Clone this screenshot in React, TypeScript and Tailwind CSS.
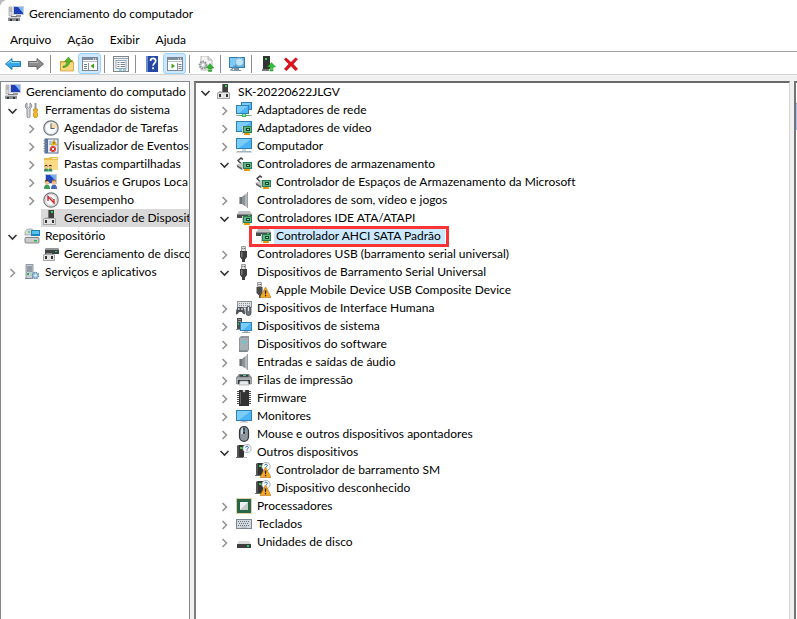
import { useState, type ReactNode } from 'react';
import clsx from 'clsx';

function Svg({ children }: { children: ReactNode }) {
  return (
    <svg viewBox="0 0 16 16" className="size-4 shrink-0" aria-hidden="true">
      {children}
    </svg>
  );
}

function Screen({ x = 0, y = 1, w = 16, h = 11 }: { x?: number; y?: number; w?: number; h?: number }) {
  return (
    <g>
      <rect x={x} y={y} width={w} height={h} fill="#2f7fb5" />
      <rect x={x + 1} y={y + 1} width={w - 2} height={h - 2} fill="#4ab4f5" />
      <path d={`M${x + 1} ${y + 1}h${w - 2}l-${w - 4} ${h - 2}h-2z`} fill="#7accfa" />
    </g>
  );
}

function Card() {
  return (
    <g>
      <path d="M6 6h1v8H6z" fill="#c9c9c9" />
      <rect x="7" y="6" width="9" height="7" fill="#2c7d50" />
      <rect x="8" y="7" width="7" height="5" fill="#5fb384" />
      <rect x="10" y="8" width="4" height="3" fill="#174a31" />
      <rect x="11" y="9" width="2" height="1" fill="#8fd1ae" />
      <path d="M8 13h6v2H8z" fill="#f0a516" />
      <path d="M10 13v2M12 13v2" stroke="#c97b0a" strokeWidth=".5" />
    </g>
  );
}

function Warning() {
  return (
    <g>
      <path d="M10.500 5 16 15.500H5z" fill="#f7a823" stroke="#b87410" strokeWidth=".6" />
      <path d="M9.700 8.500h1.700l-.4 3.700h-.9zM9.900 13h1.300v1.300H9.900z" fill="#222" />
    </g>
  );
}

function Tower() {
  return (
    <g>
      <path d="M1 2 3 1h5v12H1z" fill="#333" />
      <path d="M1 2 3 1v12H1z" fill="#555" />
      <rect x="4" y="3" width="2" height="2" fill="#35d04b" />
      <path d="M0 13h7v1H0z" fill="#6b6b6b" />
      <path d="M7 13h4v1H7z" fill="#b5b5b5" />
    </g>
  );
}

function Person({ x, hair, body }: { x: number; hair: string; body: string }) {
  return (
    <g>
      <path d={`M${x} 15c0-3 1-4.500 3-4.500s3 1.500 3 4.500z`} fill={body} />
      <circle cx={x + 3} cy="8.500" r="2.200" fill="#f0c090" />
      <path d={`M${x + 0.7} 8.500c0-4 4.600-4 4.600 0l-1-1.300H${x + 1.7}z`} fill={hair} />
    </g>
  );
}

const icons = {
  management: (
    <Svg>
      <rect x="5" y="0" width="11" height="9" fill="#c9ccd4" />
      <rect x="6" y="1" width="9" height="7" fill="#1f3fb8" />
      <path d="M10 1h5v6z" fill="#7fb6f5" />
      <path d="M8 9h5v2H8z" fill="#9a9a9a" />
      <path d="M1 1h3v9H1z" fill="#dadada" stroke="#909090" strokeWidth=".6" />
      <path d="M1.500 3h2M1.500 5h2" stroke="#777" strokeWidth=".7" />
      <path d="M3 10h6v1H3z" fill="#777" />
      <rect x="0" y="11" width="12" height="4" fill="#8b8f94" />
      <path d="M0 11h12v1H0z" fill="#d0d4d8" />
      <path d="M2 13h2v2H2zM8 13h2v2H8z" fill="#333" />
    </Svg>
  ),
  tools: (
    <Svg>
      <path d="M3 1v4l1.500 1L6 5V1c2 1 2.500 4 0 6v7.500c0 1.500-3 1.500-3 0V7C.5 5 1 2 3 1z" fill="#d6d9db" stroke="#6f7376" strokeWidth=".8" />
      <path d="M10.500 1h2v6h-2z" fill="#999" />
      <path d="M9.500 7h4v2l-.8 1 .8 1v3.500c0 1.500-4 1.500-4 0V11l.8-1-.8-1z" fill="#f4b526" stroke="#b47a0a" strokeWidth=".6" />
    </Svg>
  ),
  clock: (
    <Svg>
      <circle cx="8" cy="8" r="7.200" fill="#d8dce0" stroke="#6f767c" strokeWidth="1.200" />
      <circle cx="8" cy="8" r="5.500" fill="#fbfcfe" />
      <path d="M8 8V2.500A5.500 5.500 0 0 1 13.500 8z" fill="#f5d9a8" />
      <path d="M8 3.500V8.500h3.500" fill="none" stroke="#59636d" strokeWidth="1.100" />
    </Svg>
  ),
  events: (
    <Svg>
      <rect x="2" y="1" width="13" height="14" fill="#e4ecf6" stroke="#5a6f91" />
      <rect x="2" y="1" width="3" height="14" fill="#50719f" />
      <path d="M.5 3h3M.5 5.500h3M.5 8h3M.5 10.500h3M.5 13h3" stroke="#878787" />
      <path d="M6 4h3M6 6h2M6 12h2" stroke="#7b9cca" />
      <path d="m11 2 3 5H8z" fill="#f9c51c" stroke="#b98c00" strokeWidth=".5" />
      <path d="M11 3.800v2" stroke="#222" strokeWidth=".8" />
      <circle cx="10" cy="11" r="3" fill="#dc3527" />
      <path d="m8.800 9.800 2.400 2.400m0-2.400-2.400 2.400" stroke="#fff" strokeWidth=".9" />
    </Svg>
  ),
  shared: (
    <Svg>
      <path d="M1 4V2h5l1-1h8v13H1z" fill="#e8bb4b" />
      <path d="M1 4h14v10H1z" fill="#fbdc85" />
      <path d="M9 2h5v1H9z" fill="#fff2c4" />
      <g transform="translate(1 5) scale(.7)">
        <Person x={0} hair="#4c301b" body="#39895a" />
        <Person x={6} hair="#332217" body="#2f8f63" />
      </g>
    </Svg>
  ),
  users: (
    <Svg>
      <rect x="2" y="0" width="12" height="10" fill="#c9ccd4" />
      <rect x="3" y="1" width="10" height="8" fill="#2147c0" />
      <path d="M7 1h6v6z" fill="#79aff0" />
      <Person x={1} hair="#4c301b" body="#3b9c53" />
      <Person x={8} hair="#b6762b" body="#416cb3" />
    </Svg>
  ),
  performance: (
    <Svg>
      <circle cx="8" cy="8" r="7.200" fill="#eee" stroke="#76797c" strokeWidth="1.200" />
      <circle cx="8" cy="8" r="5.500" fill="#fff" stroke="#bbb" strokeWidth=".6" />
      <path d="M5 9V4.500l6 6.500V7" fill="none" stroke="#d3262c" strokeWidth="1.400" />
      <path d="M7 4.500 10.500 8" stroke="#444" strokeWidth=".8" />
    </Svg>
  ),
  device: (
    <Svg>
      <path d="M5 1l1-1h5v9H5z" fill="#3f3f3f" />
      <path d="M5 1l1-1v9H5z" fill="#777" />
      <path d="M8 1h2v2H8z" fill="#2bd247" />
      <path d="M2 7h3v1H2z" fill="#bbb" />
      <path d="M1 8h11l1 1v6H0V9z" fill="#a5a6a8" />
      <path d="M1 9h11v5H1z" fill="#e4e4e5" />
      <path d="M2 10h2v3H2zM9 10h2v3H9z" fill="#333" />
    </Svg>
  ),
  storage: (
    <Svg>
      <path d="M1 4c1-4 8-4 9-1l-2 4H1z" fill="#d5dbde" stroke="#828a8e" strokeWidth=".6" />
      <circle cx="5" cy="4" r="1.300" fill="#8fc96f" />
      <rect x="7" y="2" width="9" height="6" fill="#1f86bd" />
      <rect x="8" y="3" width="7" height="3" fill="#54c2ee" />
      <path d="M2 8h12l1 2H1z" fill="#eee" />
      <rect x="1" y="9.500" width="14" height="5.500" rx="1" fill="#cacccd" stroke="#6c6f70" strokeWidth=".8" />
      <path d="M10 12h3v1.500h-3z" fill="#25bd35" />
    </Svg>
  ),
  diskManagement: (
    <Svg>
      <path d="M3 2h12l1 2v4H2V4z" fill="#3f4245" />
      <path d="M3 2h12l1 2H2z" fill="#929699" />
      <path d="M12 5h2v1h-2z" fill="#2bd247" />
      <path d="M3 7h6v1H3z" fill="#8d8e90" />
      <path d="M1 8h10l1 1v6H0V9z" fill="#a5a6a8" />
      <path d="M1 9h10v5H1z" fill="#e4e4e5" />
      <path d="M2 10h2v3H2zM8 10h2v3H8z" fill="#333" />
    </Svg>
  ),
  services: (
    <Svg>
      <path d="M2 .5h7v14H2z" fill="#c3ccd3" stroke="#7d878f" strokeWidth=".8" />
      <path d="M3 3h5M3 5h5M3 7h5" stroke="#63717d" />
      <path d="M3 9h2v2H3z" fill="#30b540" />
      <circle cx="11.500" cy="11.500" r="3" fill="#a7cbe5" stroke="#5b8baf" strokeWidth="1.500" strokeDasharray="1.500 .8" />
      <circle cx="11.500" cy="11.500" r="1.100" fill="#fff" />
      <path d="M1 14h6v1H1z" fill="#7d878f" />
    </Svg>
  ),
  network: (
    <Svg>
      <Screen x={5} y={0} w={11} h={8} />
      <Screen x={0} y={3} w={13} h={9} />
      <path d="M2 13h12v1H2zM6 12h4v3H6z" fill="#42b85a" />
      <path d="M7 12h2v2H7z" fill="#8fe09b" />
      <path d="M0 13h3v1H0zM13 13h3v1h-3z" fill="#aaa" />
    </Svg>
  ),
  video: (
    <Svg>
      <Screen />
      <Card />
    </Svg>
  ),
  computer: (
    <Svg>
      <Screen y={0} />
      <path d="M6 11h4v2H6z" fill="#d5d9dd" />
      <path d="M1 13h14l1 1.500H0z" fill="#9fb3c2" />
    </Svg>
  ),
  storageCtl: (
    <Svg>
      <path d="M1 4.500 5 1l2.500 2-1.200 1L5 3 3 4.700 5.500 7l1-.8L8 7.500 5.500 9z" fill="#444" />
      <path d="M0 9 7 6.500 15 9v3H3z" fill="#c5c7c8" />
      <path d="m1 9 5 3v2L1 11z" fill="#66696b" />
      <Card />
    </Svg>
  ),
  speaker: (
    <Svg>
      <path d="M3 5h3v7H3z" fill="#6e7377" />
      <path d="M6 5 11 1v14.500L6 12z" fill="#b4b9bc" />
      <path d="M6 5 9 2.500v11.500L6 12z" fill="#8d9397" />
      <path d="M11 0h1v16h-1z" fill="#9ba1a5" />
      <path d="M3 5h1v7H3z" fill="#a9adb0" />
    </Svg>
  ),
  ide: (
    <Svg>
      <path d="M3 1h11l2 3H1z" fill="#bfc2c4" />
      <path d="M1 4h15v4H1z" fill="#4a4d50" />
      <path d="M1 4h15v1H1z" fill="#85898c" />
      <path d="M12 5h2v1h-2z" fill="#2bd247" />
      <Card />
    </Svg>
  ),
  usb: (
    <Svg>
      <path d="M5.500.5h4v5h-4z" fill="#ddd" stroke="#8a8a8a" strokeWidth=".8" />
      <path d="M6.500 2h.8v1h-.8zM8 2h.8v1H8z" fill="#444" />
      <path d="M4 5h7v6l-2 2.500V16H6v-2.500L4 11z" fill="#3e3e3e" />
      <path d="M5 6h1.500v5H5z" fill="#7a7a7a" />
    </Svg>
  ),
  usbWarn: (
    <Svg>
      <path d="M2.500.5h4v4h-4z" fill="#ddd" stroke="#8a8a8a" strokeWidth=".8" />
      <path d="M3.500 2h.8v1h-.8zM5 2h.8v1H5z" fill="#444" />
      <path d="M1.500 5h6v6L6 13.500V16H4v-2.500L1.500 11z" fill="#4b4b4b" />
      <Warning />
    </Svg>
  ),
  hid: (
    <Svg>
      <rect x="1.500" y="1.500" width="14" height="6" fill="#dfe3e7" stroke="#8a9197" />
      <path d="M3 3.500h11M3 5.500h11" stroke="#8a9197" strokeDasharray="1 1" />
      <path d="M0 14c0-4 1-7 3-7h3c2 0 3 3 3 7-1.500 1.500-2.500-2-3.500-2h-2C2.500 12 1 16 0 14z" fill="#4c5155" />
      <circle cx="2.800" cy="9" r="1" fill="#ccc" />
      <circle cx="6" cy="9" r="1" fill="#ccc" />
      <rect x="10" y="6.500" width="5" height="9" rx="2.500" fill="#71777c" stroke="#3d4246" strokeWidth=".8" />
      <path d="M12.500 7v4" stroke="#e5e5e5" />
    </Svg>
  ),
  system: (
    <Svg>
      <path d="M1 0h5v11H1z" fill="#4a4d50" />
      <path d="M2 1h3v1H2zM2 3h3v1H2z" fill="#999" />
      <path d="M2 5h1v2H2z" fill="#2bd247" />
      <path d="M0 11h6v1H0z" fill="#888" />
      <Screen x={4} y={4} w={12} h={9} />
      <path d="M8 13h4v1H8z" fill="#b7bcc0" />
      <path d="M6 14h8v1H6z" fill="#9aa4ab" />
    </Svg>
  ),
  software: (
    <Svg>
      <path d="M3 2 5 0h8v14l-2 2H3z" fill="#8e979d" />
      <path d="M4 2h8v13H4z" fill="#a6afb4" />
      <circle cx="8" cy="6" r="1.200" fill="#35dce8" />
      <path d="M3 15h9" stroke="#6d767b" />
    </Svg>
  ),
  printer: (
    <Svg>
      <path d="M3 2h10l2 3H1z" fill="#757a7e" />
      <path d="M4 3h8v2H4z" fill="#3a3d40" />
      <rect x="0" y="5" width="16" height="7" rx="1" fill="#a9adb0" stroke="#73787b" strokeWidth=".7" />
      <path d="M2 8h12v4H2z" fill="#35383a" />
      <path d="M7 3h3v1H7z" fill="#42d49b" />
      <path d="M4 9h8l1 4H3z" fill="#e8eaeb" stroke="#8a8d8f" strokeWidth=".6" />
    </Svg>
  ),
  firmware: (
    <Svg>
      <path d="M3 1v14M13 1v14" stroke="#555" strokeWidth="4" strokeDasharray="1 1" />
      <rect x="3" y="0" width="10" height="16" fill="#333" />
      <path d="M4 2h1v12H4z" fill="#656565" />
      <circle cx="8" cy="1" r="1.300" fill="#d0d0d0" />
    </Svg>
  ),
  monitor: (
    <Svg>
      <Screen y={2} />
      <path d="M6 13h4v1H6z" fill="#9aa4ab" />
      <path d="M4 14h8" stroke="#b7bcc0" />
    </Svg>
  ),
  mouse: (
    <Svg>
      <rect x="3.500" y=".7" width="9" height="14.600" rx="4.500" fill="#8f969d" stroke="#30363d" strokeWidth="1.200" />
      <path d="M5 4c0-2 1-2.500 2-2.500V8H5z" fill="#ced3d8" />
      <rect x="7" y="2" width="2" height="6" rx="1" fill="#26313d" />
      <path d="M8 3.500v2.500" stroke="#61bff1" strokeWidth=".8" />
    </Svg>
  ),
  unknown: (
    <Svg>
      <Tower />
      <circle cx="11" cy="4.500" r="4.200" fill="#f6f8fa" stroke="#9aa3aa" strokeWidth=".8" />
      <path d="M9.600 3.600c0-1.900 2.800-1.900 2.800 0 0 1-1.400 1-1.400 2.100M11 6.400v.9" fill="none" stroke="#2872b9" />
    </Svg>
  ),
  unknownWarn: (
    <Svg>
      <Tower />
      <circle cx="11" cy="4.500" r="4.200" fill="#f6f8fa" stroke="#9aa3aa" strokeWidth=".8" />
      <path d="M9.700 3.300c0-1.600 2.600-1.600 2.600 0 0 1-1.300 1-1.300 2.100" fill="none" stroke="#2872b9" />
      <Warning />
    </Svg>
  ),
  cpu: (
    <Svg>
      <rect x=".5" y=".5" width="15" height="15" fill="none" stroke="#c8a343" strokeDasharray="1 1" />
      <rect x="1" y="1" width="14" height="14" fill="#28664a" />
      <rect x="4" y="4" width="8" height="8" fill="#c5cdc9" />
      <path d="M4 4h8l-8 8z" fill="#eef1f0" />
    </Svg>
  ),
  keyboard: (
    <Svg>
      <rect x=".5" y="3.500" width="15" height="9" fill="#d4d9e0" stroke="#7c8591" />
      <path d="M2 5.500h12M2 9.500h12" stroke="#68717d" strokeDasharray="1 1" />
      <path d="M3 7.500h10" stroke="#68717d" strokeDasharray="1 1" />
      <path d="M5 11h6" stroke="#9aa2ac" strokeWidth=".7" />
    </Svg>
  ),
  disk: (
    <Svg>
      <path d="M3 7h10l2 3H1z" fill="#d9dadb" />
      <path d="M1 10h14v4H1z" fill="#3c3e40" />
      <path d="M11 11h2v2h-2z" fill="#2bd247" />
    </Svg>
  ),
};

type IconName = keyof typeof icons;

interface TreeNode {
  label: string;
  icon: IconName;
  open?: boolean;
  closed?: boolean;
  selected?: boolean;
  marked?: boolean;
  children?: TreeNode[];
}

const consoleTree: TreeNode[] = [
  {
    label: 'Ferramentas do sistema',
    icon: 'tools',
    open: true,
    children: [
      { label: 'Agendador de Tarefas', icon: 'clock', closed: true },
      { label: 'Visualizador de Eventos', icon: 'events', closed: true },
      { label: 'Pastas compartilhadas', icon: 'shared', closed: true },
      { label: 'Usuários e Grupos Loca', icon: 'users', closed: true },
      { label: 'Desempenho', icon: 'performance', closed: true },
      { label: 'Gerenciador de Disposit', icon: 'device', selected: true },
    ],
  },
  {
    label: 'Repositório',
    icon: 'storage',
    open: true,
    children: [{ label: 'Gerenciamento de disco', icon: 'diskManagement' }],
  },
  { label: 'Serviços e aplicativos', icon: 'services', closed: true },
];

const deviceTree: TreeNode[] = [
  {
    label: 'SK-20220622JLGV',
    icon: 'device',
    open: true,
    children: [
      { label: 'Adaptadores de rede', icon: 'network', closed: true },
      { label: 'Adaptadores de vídeo', icon: 'video', closed: true },
      { label: 'Computador', icon: 'computer', closed: true },
      {
        label: 'Controladores de armazenamento',
        icon: 'storageCtl',
        open: true,
        children: [{ label: 'Controlador de Espaços de Armazenamento da Microsoft', icon: 'storageCtl' }],
      },
      { label: 'Controladores de som, vídeo e jogos', icon: 'speaker', closed: true },
      {
        label: 'Controladores IDE ATA/ATAPI',
        icon: 'ide',
        open: true,
        children: [{ label: 'Controlador AHCI SATA Padrão', icon: 'ide', marked: true }],
      },
      { label: 'Controladores USB (barramento serial universal)', icon: 'usb', closed: true },
      {
        label: 'Dispositivos de Barramento Serial Universal',
        icon: 'usb',
        open: true,
        children: [{ label: 'Apple Mobile Device USB Composite Device', icon: 'usbWarn' }],
      },
      { label: 'Dispositivos de Interface Humana', icon: 'hid', closed: true },
      { label: 'Dispositivos de sistema', icon: 'system', closed: true },
      { label: 'Dispositivos do software', icon: 'software', closed: true },
      { label: 'Entradas e saídas de áudio', icon: 'speaker', closed: true },
      { label: 'Filas de impressão', icon: 'printer', closed: true },
      { label: 'Firmware', icon: 'firmware', closed: true },
      { label: 'Monitores', icon: 'monitor', closed: true },
      { label: 'Mouse e outros dispositivos apontadores', icon: 'mouse', closed: true },
      {
        label: 'Outros dispositivos',
        icon: 'unknown',
        open: true,
        children: [
          { label: 'Controlador de barramento SM', icon: 'unknownWarn' },
          { label: 'Dispositivo desconhecido', icon: 'unknownWarn' },
        ],
      },
      { label: 'Processadores', icon: 'cpu', closed: true },
      { label: 'Teclados', icon: 'keyboard', closed: true },
      { label: 'Unidades de disco', icon: 'disk', closed: true },
    ],
  },
];

function Chevron({ open }: { open: boolean }) {
  return (
    <svg viewBox="0 0 16 16" className="size-4" fill="none" aria-hidden="true">
      {open ? (
        <path d="m4.500 7 4 4 4-4" stroke="#333" strokeWidth="1.600" />
      ) : (
        <path d="m6.500 5 4 4-4 4" stroke="#949494" strokeWidth="1.600" />
      )}
    </svg>
  );
}

function Item({ node }: { node: TreeNode }) {
  const expandable = !!(node.children || node.closed);
  const [open, setOpen] = useState(!!node.open);

  return (
    <li>
      <div className="flex h-[18px] items-center gap-0.5">
        {expandable ? (
          <button aria-label={node.label} aria-expanded={open} onClick={() => setOpen(!open)}>
            <Chevron open={open} />
          </button>
        ) : (
          <span className="w-4 shrink-0" />
        )}
        <button
          className={clsx(
            'relative flex h-full items-center gap-[3px] pl-0.5 whitespace-nowrap',
            node.selected && 'grow bg-[#d9d9d9]'
          )}
        >
          {icons[node.icon]}
          <span className={clsx('px-0.5', node.marked && 'bg-[#cce8ff] pr-1')}>{node.label}</span>
          {node.marked && <span className="absolute -inset-x-1 -top-px -bottom-0.5 border-3 border-[#fa3434]" />}
        </button>
      </div>
      {open && node.children && (
        <ul className="pl-[19px]">
          {node.children.map((child) => (
            <Item key={child.label} node={child} />
          ))}
        </ul>
      )}
    </li>
  );
}

function ToolButton({ label, active, children }: { label: string; active?: boolean; children: ReactNode }) {
  return (
    <button
      aria-label={label}
      className={clsx(
        'flex h-[21px] w-[23px] items-center justify-center rounded-[3px] border',
        active ? 'border-[#99d1ff] bg-[#cce8ff]' : 'border-transparent'
      )}
    >
      <Svg>{children}</Svg>
    </button>
  );
}

function Separator() {
  return <span className="mr-1 ml-[3px] h-[18px] w-px bg-[#8d8d8d]" />;
}

function PaneGlyph({ flip }: { flip?: boolean }) {
  return (
    <g>
      <rect x=".5" y="1.500" width="15" height="13" fill="#fff" stroke="#7d8590" />
      <path d="M1 2h14v2H1z" fill="#7d8ea5" />
      <path d="M11 3h1M13 3h1" stroke="#fff" />
      <path d="M1 5.500h14" stroke="#b9c0c8" />
      <path d={flip ? 'M10.500 7v7' : 'M6.500 7v7'} stroke="#8b939c" />
      <path d={flip ? 'M11.500 8.500h3M11.500 10.500h3M11.500 12.500h3' : 'M2 8.500h3M2 10.500h3M2 12.500h3'} stroke="#6f7d8e" />
      <path d={flip ? 'M4.500 7.500v5l3.500-2.500z' : 'M12 7.500v5L8.500 10z'} fill="#3aa317" />
    </g>
  );
}

function Toolbar() {
  return (
    <div className="flex h-[23px] items-center border-b border-[#d5d5d5] pt-px pl-px">
      <ToolButton label="Voltar">
        <path d="M.5 8 7 2.500v3h8.500v5H7v3z" fill="#35a7e8" stroke="#1873b5" strokeWidth=".9" />
        <path d="M2.500 7.500 6 4.500v2h8.500" fill="none" stroke="#9bdcfa" />
      </ToolButton>
      <ToolButton label="Avançar">
        <path d="M15.500 8 9 2.500v3H.5v5H9v3z" fill="#8c8c8c" stroke="#606060" strokeWidth=".9" />
        <path d="M1.500 6.500H10v-2" fill="none" stroke="#bdbdbd" />
      </ToolButton>
      <Separator />
      <ToolButton label="Acima">
        <path d="M1 5h5l1-1h7v11H1z" fill="#e1ad3d" />
        <path d="M1.500 6h13v9h-13z" fill="#fad77c" stroke="#c89533" strokeWidth=".7" />
        <path d="M4 10c3 0 3.500-2 3.800-4.500H5.500L9.500 1l3.500 4.500h-2.200C10.500 9 8 11.500 4 11.500z" fill="#57b52b" stroke="#2e8517" strokeWidth=".5" />
      </ToolButton>
      <ToolButton label="Mostrar árvore do console" active>
        <PaneGlyph />
      </ToolButton>
      <Separator />
      <ToolButton label="Propriedades">
        <rect x=".5" y=".5" width="15" height="15" fill="#eef0f2" stroke="#7e858c" />
        <path d="M1 2.500h14" stroke="#9ca6b0" />
        <rect x="3" y="4.500" width="10" height="8" fill="#fff" stroke="#7894b6" strokeWidth=".8" />
        <path d="M4.500 6.500h2M4.500 8.500h2M4.500 10.500h2M7.500 6.500H12M7.500 8.500H12M7.500 10.500H12" stroke="#6b7480" strokeWidth=".9" />
        <path d="M6 14h3M10 14h3" stroke="#3eabc9" />
      </ToolButton>
      <Separator />
      <ToolButton label="Ajuda">
        <rect x="2" y="0" width="12" height="16" fill="#2648a5" />
        <path d="M2 0h2v16H2z" fill="#6d8bd1" />
        <path d="M6.500 5c0-3.500 5.200-3.500 5.200 0 0 2-2.600 2.300-2.600 4.800M9.100 11.300v2" fill="none" stroke="#fff" strokeWidth="1.700" />
      </ToolButton>
      <ToolButton label="Mostrar painel de ações" active>
        <PaneGlyph flip />
      </ToolButton>
      <Separator />
      <ToolButton label="Verificar alterações de hardware">
        <path d="M3 0h7l4 4v10H3z" fill="#f4f4f4" stroke="#aaa" strokeWidth=".8" />
        <path d="M10 0v4h4" fill="#ddd" stroke="#aaa" strokeWidth=".8" />
        <circle cx="5" cy="9" r="3.500" fill="#c3c7ca" stroke="#8b9094" strokeWidth="1.800" strokeDasharray="1.600 1" />
        <circle cx="5" cy="9" r="1.400" fill="#fff" />
        <path d="M12 7.500 16 12h-2.300v1h-3.400v-1H8zM10.300 14h3.400v1.500h-3.400z" fill="#2fb52f" stroke="#178718" strokeWidth=".4" />
      </ToolButton>
      <Separator />
      <ToolButton label="Adicionar driver">
        <Screen y={1} h={11} />
        <path d="M5 12h5v2H5zM3 14h9v1H3z" fill="#8294a2" />
        <circle cx="10.500" cy="6" r="4" fill="#b9e4fb" stroke="#8fb3c9" strokeWidth="1.100" />
        <path d="m7.500 9-6 5.500" stroke="#718b9c" strokeWidth="1.600" />
      </ToolButton>
      <Separator />
      <ToolButton label="Atualizar driver">
        <path d="M3 0h7v13H3z" fill="#333" />
        <path d="M5 2h2v2H5z" fill="#35d04b" />
        <path d="M2 13h7v2H2z" fill="#777" />
        <path d="M11.500 6.500 15.700 11h-2.500v1.500H9.800V11H7.300zM9.800 13.500h3.400V15H9.800z" fill="#35bd3a" stroke="#178718" strokeWidth=".4" />
      </ToolButton>
      <ToolButton label="Desinstalar dispositivo">
        <path d="M3 1.500 8 6l4.500-4.500L15 3l-4.500 5 4.500 5-2.500 2L8 10.300 3.500 15 1 13l4.500-5L1 3.500z" fill="#d9141e" />
      </ToolButton>
    </div>
  );
}

export default function App() {
  return (
    <div className="min-h-screen bg-[#b9b9b9] font-[Lato,sans-serif] text-[12px] leading-[18px] text-black [font-variant-ligatures:none]">
      <main className="flex min-h-screen flex-col overflow-hidden rounded-tl-lg bg-[#f0f0f0]">
        <header className="bg-white">
          <div className="flex h-[27px] items-center gap-[5px] pl-2">
            {icons.management}
            <h1>Gerenciamento do computador</h1>
          </div>
          <nav className="flex h-6 items-center gap-4 pt-0.5 pl-[10px]">
            <button>Arquivo</button>
            <button>Ação</button>
            <button>Exibir</button>
            <button>Ajuda</button>
          </nav>
          <div className="border-t border-[#a0a0a0]">
            <Toolbar />
          </div>
        </header>

        <div className="flex grow gap-1 pt-1.5">
          <section className="w-[190px] shrink-0 overflow-hidden border border-b-0 border-[#828790] bg-white pt-px pr-px">
            <button className="flex h-[18px] items-center gap-[5px] pl-1 whitespace-nowrap">
              {icons.management}
              <span>Gerenciamento do computado</span>
            </button>
            <ul className="pl-[3px]">
              {consoleTree.map((node) => (
                <Item key={node.label} node={node} />
              ))}
            </ul>
          </section>

          <section className="min-w-0 grow border-t-2 border-r border-l-2 border-t-[#696969] border-r-[#d5d5d5] border-l-[#808080] bg-white pl-px">
            <ul>
              {deviceTree.map((node) => (
                <Item key={node.label} node={node} />
              ))}
            </ul>
          </section>

          <aside className="w-[3px] shrink-0 border-t-2 border-l-2 border-[#747474] bg-white pt-5">
            <div className="h-[27px] border-t border-[#a0a0a0] bg-[#a9c1ec]" />
          </aside>
        </div>
      </main>
    </div>
  );
}
